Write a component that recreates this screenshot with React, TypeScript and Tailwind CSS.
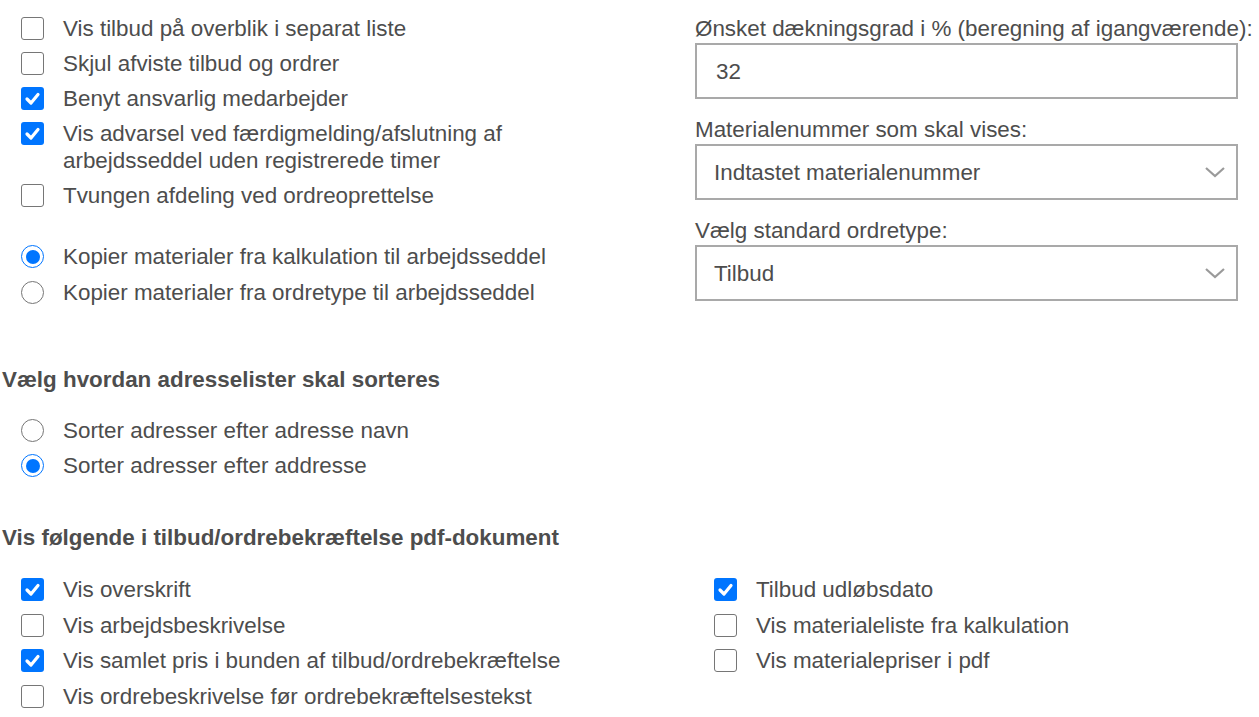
import React from "react";

const font = { fontFamily: '"Liberation Sans", Arial, sans-serif' };

function Check({ checked }: { checked?: boolean }) {
  if (checked) {
    return (
      <span className="w-[23px] h-[23px] shrink-0 rounded-[3px] bg-[#0075ff] flex items-center justify-center mt-[2px]">
        <svg width="17" height="17" viewBox="0 0 17 17">
          <path d="M3 9 L7 13 L14 4.5" fill="none" stroke="#fff" strokeWidth="3.2" strokeLinecap="round" strokeLinejoin="round" />
        </svg>
      </span>
    );
  }
  return <span className="w-[23px] h-[23px] shrink-0 rounded-[3px] border-[1.5px] border-[#767676] bg-white mt-[2px]" />;
}

function Radio({ checked }: { checked?: boolean }) {
  if (checked) {
    return (
      <span className="w-[23px] h-[23px] shrink-0 rounded-full border-[1.5px] border-[#0075ff] bg-white flex items-center justify-center mt-[2px]">
        <span className="w-[14px] h-[14px] rounded-full bg-[#0075ff]" />
      </span>
    );
  }
  return <span className="w-[23px] h-[23px] shrink-0 rounded-full border-[1.5px] border-[#767676] bg-white mt-[2px]" />;
}

function Row({ children, checked, radio }: { children: React.ReactNode; checked?: boolean; radio?: boolean }) {
  return (
    <label className="flex items-start gap-[19px] pl-[19px]">
      {radio ? <Radio checked={checked} /> : <Check checked={checked} />}
      <span>{children}</span>
    </label>
  );
}

function Chevron() {
  return (
    <svg width="22" height="12" viewBox="0 0 22 12" className="shrink-0">
      <polyline points="2,2 11,10 20,2" fill="none" stroke="#9a9a9a" strokeWidth="2.2" />
    </svg>
  );
}

export default function App() {
  return (
    <div style={font} className="w-[1259px] h-[717px] overflow-hidden bg-white text-[#4d4d4d] text-[22.4px] leading-[27px] pl-[2px] pt-[15px]">
      <div className="flex">
        {/* left options */}
        <div className="w-[630px] shrink-0">
          <div className="flex flex-col gap-[8px]">
            <Row>Vis tilbud på overblik i separat liste</Row>
            <Row>Skjul afviste tilbud og ordrer</Row>
            <Row checked>Benyt ansvarlig medarbejder</Row>
            <Row checked>Vis advarsel ved færdigmelding/afslutning af arbejdsseddel uden registrerede timer</Row>
            <Row>Tvungen afdeling ved ordreoprettelse</Row>
          </div>
          <div className="flex flex-col gap-[9px] mt-[34px]">
            <Row radio checked>Kopier materialer fra kalkulation til arbejdsseddel</Row>
            <Row radio>Kopier materialer fra ordretype til arbejdsseddel</Row>
          </div>
        </div>

        {/* right fields */}
        <div className="ml-[63px] flex flex-col">
          <div className="whitespace-nowrap">Ønsket dækningsgrad i % (beregning af igangværende):</div>
          <div className="mt-[1px] w-[543px] h-[56px] border-2 border-[#a9a9a9] flex items-center pl-[19px]">32</div>

          <div className="mt-[17px]">Materialenummer som skal vises:</div>
          <div className="mt-[1px] w-[543px] h-[56px] border-2 border-[#a9a9a9] flex items-center justify-between pl-[17px] pr-[10px]">
            <span>Indtastet materialenummer</span>
            <Chevron />
          </div>

          <div className="mt-[17px]">Vælg standard ordretype:</div>
          <div className="mt-[1px] w-[543px] h-[56px] border-2 border-[#a9a9a9] flex items-center justify-between pl-[17px] pr-[10px]">
            <span>Tilbud</span>
            <Chevron />
          </div>
        </div>
      </div>

      <h3 className="font-bold mt-[60px]">Vælg hvordan adresselister skal sorteres</h3>
      <div className="flex flex-col gap-[8px] mt-[24px]">
        <Row radio>Sorter adresser efter adresse navn</Row>
        <Row radio checked>Sorter adresser efter addresse</Row>
      </div>

      <h3 className="font-bold mt-[45px]">Vis følgende i tilbud/ordrebekræftelse pdf-dokument</h3>
      <div className="grid grid-cols-[693px_1fr] mt-[25px]">
        <div className="flex flex-col gap-[8.5px]">
          <Row checked>Vis overskrift</Row>
          <Row>Vis arbejdsbeskrivelse</Row>
          <Row checked>Vis samlet pris i bunden af tilbud/ordrebekræftelse</Row>
          <Row>Vis ordrebeskrivelse før ordrebekræftelsestekst</Row>
        </div>
        <div className="flex flex-col gap-[8.5px]">
          <Row checked>Tilbud udløbsdato</Row>
          <Row>Vis materialeliste fra kalkulation</Row>
          <Row>Vis materialepriser i pdf</Row>
        </div>
      </div>
    </div>
  );
}
